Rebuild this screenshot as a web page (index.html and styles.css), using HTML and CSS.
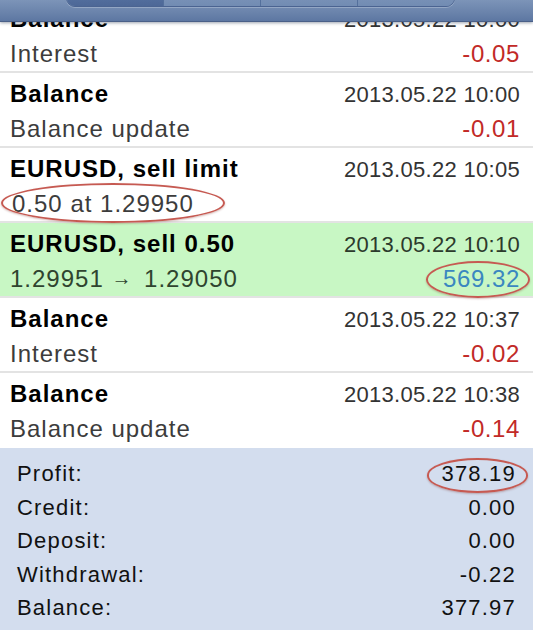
FILE: index.html
```html
<!DOCTYPE html>
<html>
<head>
<meta charset="utf-8">
<link rel="stylesheet" href="styles.css">
</head>
<body>
<div class="screen">
  <header class="navbar">
    <div class="seg">
      <span class="seg-item on"></span>
      <span class="seg-item"></span>
      <span class="seg-item"></span>
      <span class="seg-item"></span>
    </div>
  </header>

  <div class="list">
    <div class="row">
      <div class="line"><span class="title">Balance</span><span class="date">2013.05.22 10:00</span></div>
      <div class="line"><span class="sub">Interest</span><span class="amt neg">-0.05</span></div>
    </div>
    <div class="row">
      <div class="line"><span class="title">Balance</span><span class="date">2013.05.22 10:00</span></div>
      <div class="line"><span class="sub">Balance update</span><span class="amt neg">-0.01</span></div>
    </div>
    <div class="row">
      <div class="line"><span class="title">EURUSD, sell limit</span><span class="date">2013.05.22 10:05</span></div>
      <div class="line"><span class="sub mark mark-order">0.50 at 1.29950</span></div>
    </div>
    <div class="row deal">
      <div class="line"><span class="title">EURUSD, sell 0.50</span><span class="date">2013.05.22 10:10</span></div>
      <div class="line"><span class="sub">1.29951 <span class="arrow">&rarr;</span> 1.29050</span><span class="amt pos mark mark-deal">569.32</span></div>
    </div>
    <div class="row">
      <div class="line"><span class="title">Balance</span><span class="date">2013.05.22 10:37</span></div>
      <div class="line"><span class="sub">Interest</span><span class="amt neg">-0.02</span></div>
    </div>
    <div class="row last">
      <div class="line"><span class="title">Balance</span><span class="date">2013.05.22 10:38</span></div>
      <div class="line"><span class="sub">Balance update</span><span class="amt neg">-0.14</span></div>
    </div>
  </div>

  <div class="summary">
    <div class="sum-row"><span>Profit:</span><span class="mark mark-profit">378.19</span></div>
    <div class="sum-row"><span>Credit:</span><span>0.00</span></div>
    <div class="sum-row"><span>Deposit:</span><span>0.00</span></div>
    <div class="sum-row"><span>Withdrawal:</span><span>-0.22</span></div>
    <div class="sum-row"><span>Balance:</span><span>377.97</span></div>
  </div>
</div>
</body>
</html>
```

FILE: styles.css
```css
html, body {
  margin: 0;
  padding: 0;
  background: #ffffff;
}

body {
  font-family: "Liberation Sans", Arial, Helvetica, sans-serif;
  overflow: hidden;
}

.screen {
  position: relative;
  width: 533px;
  height: 630px;
  overflow: hidden;
  background: #ffffff;
}

/* top navigation bar (overlays the scrolled list) */
.navbar {
  position: absolute;
  left: 0;
  top: 0;
  width: 100%;
  height: 21px;
  background: linear-gradient(#7c94b8, #6a83ab 60%, #5d77a2);
  border-bottom: 1px solid #4a6088;
  box-shadow: 0 1px 3px rgba(40, 55, 80, 0.45);
  z-index: 5;
}

.seg {
  position: absolute;
  left: 66px;
  top: -10px;
  width: 389px;
  height: 17px;
  display: flex;
  border: 1px solid #4b6491;
  border-radius: 0 0 9px 9px;
  overflow: hidden;
  box-sizing: border-box;
  box-shadow: 0 1px 0 rgba(255, 255, 255, 0.25);
}

.seg-item {
  flex: 1;
  background: linear-gradient(#7e96ba, #728cb3);
  border-left: 1px solid #54709c;
}

.seg-item:first-child {
  border-left: none;
}

.seg-item.on {
  background: linear-gradient(#5874a3, #4d6897);
}

/* history list */
.list {
  margin-top: -2px;
}

.row {
  height: 75px;
  box-sizing: border-box;
  padding: 3px 13px 0 10px;
  border-bottom: 2px solid #e3e3e3;
  background: #ffffff;
}

.row.last {
  border-bottom: none;
}

.row.deal {
  background: #c8f7c4;
}

.line {
  display: flex;
  justify-content: space-between;
  align-items: baseline;
  height: 35px;
  line-height: 35px;
}

.title {
  font-weight: bold;
  font-size: 24px;
  letter-spacing: 1px;
  color: #000000;
}

.date {
  font-size: 22px;
  letter-spacing: 0.3px;
  color: #333333;
}

.sub {
  font-size: 24px;
  letter-spacing: 1px;
  color: #3c3c3c;
}

.arrow {
  font-size: 20px;
  letter-spacing: 0;
  margin: 0 5px 0 0;
  vertical-align: 2px;
}

.deal .sub {
  color: #2f442f;
}

.deal .date {
  color: #2c3a2c;
}

.amt {
  font-size: 24px;
  letter-spacing: 0.6px;
}

.amt.neg {
  color: #c22a27;
}

.amt.pos {
  color: #3a87c0;
}

/* red annotation ellipses */
.mark {
  position: relative;
  display: inline-block;
}

.mark::after {
  content: "";
  position: absolute;
  border: 2.5px solid #c65a52;
  border-radius: 50%;
  box-shadow: 0 1px 2px rgba(120, 40, 30, 0.3);
  pointer-events: none;
}

.mark-order {
  margin-left: 2px;
}

.mark-order::after {
  left: -11px;
  right: -31px;
  top: -3px;
  bottom: -2px;
}

.mark-deal::after {
  left: -17px;
  right: -10px;
  top: 0px;
  bottom: -2px;
}

.mark-profit::after {
  left: -15px;
  right: -12px;
  top: 1px;
  bottom: -2px;
}

/* summary panel */
.summary {
  background: #d3ddee;
  height: 183px;
  box-sizing: border-box;
  padding: 9px 17px 0 17px;
}

.sum-row {
  display: flex;
  justify-content: space-between;
  align-items: baseline;
  height: 33.5px;
  line-height: 33.5px;
  font-size: 22px;
  letter-spacing: 1.2px;
  color: #111111;
}
```
